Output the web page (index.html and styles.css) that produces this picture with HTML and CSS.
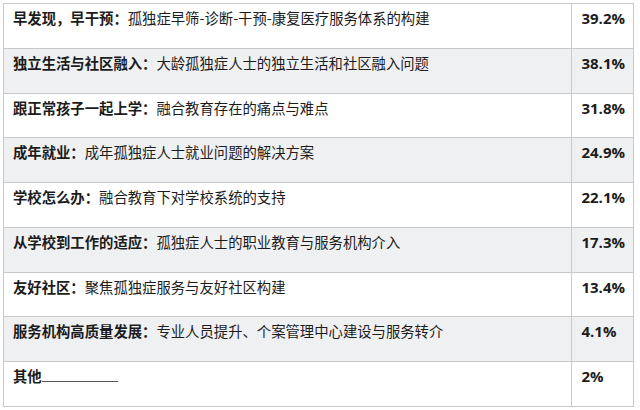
FILE: index.html
```html
<!DOCTYPE html>
<html lang="zh">
<head>
<meta charset="utf-8">
<link rel="stylesheet" href="styles.css">
</head>
<body>
<table class="survey">
  <tr class="odd"><td class="item"><b>早发现，早干预：</b>孤独症早筛-诊断-干预-康复医疗服务体系的构建</td><td class="pct">39.2%</td></tr>
  <tr class="even"><td class="item"><b>独立生活与社区融入：</b>大龄孤独症人士的独立生活和社区融入问题</td><td class="pct">38.1%</td></tr>
  <tr class="odd"><td class="item"><b>跟正常孩子一起上学：</b>融合教育存在的痛点与难点</td><td class="pct">31.8%</td></tr>
  <tr class="even"><td class="item"><b>成年就业：</b>成年孤独症人士就业问题的解决方案</td><td class="pct">24.9%</td></tr>
  <tr class="odd"><td class="item"><b>学校怎么办：</b>融合教育下对学校系统的支持</td><td class="pct">22.1%</td></tr>
  <tr class="even"><td class="item"><b>从学校到工作的适应：</b>孤独症人士的职业教育与服务机构介入</td><td class="pct">17.3%</td></tr>
  <tr class="odd"><td class="item"><b>友好社区：</b>聚焦孤独症服务与友好社区构建</td><td class="pct">13.4%</td></tr>
  <tr class="even"><td class="item"><b>服务机构高质量发展：</b>专业人员提升、个案管理中心建设与服务转介</td><td class="pct">4.1%</td></tr>
  <tr class="odd"><td class="item"><b>其他</b><span class="blank"></span></td><td class="pct">2%</td></tr>
</table>
</body>
</html>
```
FILE: styles.css
```css
html, body {
  margin: 0;
  padding: 0;
  background: #ffffff;
}
body {
  padding: 3px 0 0 3px;
}
.survey {
  border-collapse: collapse;
  width: 631px;
  font-family: "Noto Sans CJK SC", "Noto Sans", sans-serif;
  font-size: 14.35px;
  color: #1c1c1c;
}
.survey td {
  border: 1px solid #c9c9cc;
  vertical-align: top;
  height: 44.75px;
  box-sizing: border-box;
  padding: 3px 8px 0 9px;
  line-height: 22px;
}
.survey tr.even td {
  background: #eff0f2;
}
.survey tr.odd td {
  background: #ffffff;
}
.item b {
  font-weight: 700;
}
.pct {
  width: 60px;
  font-family: "Open Sans", "Noto Sans", sans-serif;
  font-weight: 700;
  font-size: 15px;
  padding-left: 8px;
}
.blank {
  display: inline-block;
  width: 76px;
  height: 15px;
  border-bottom: 1px solid #555;
  vertical-align: baseline;
}
```
